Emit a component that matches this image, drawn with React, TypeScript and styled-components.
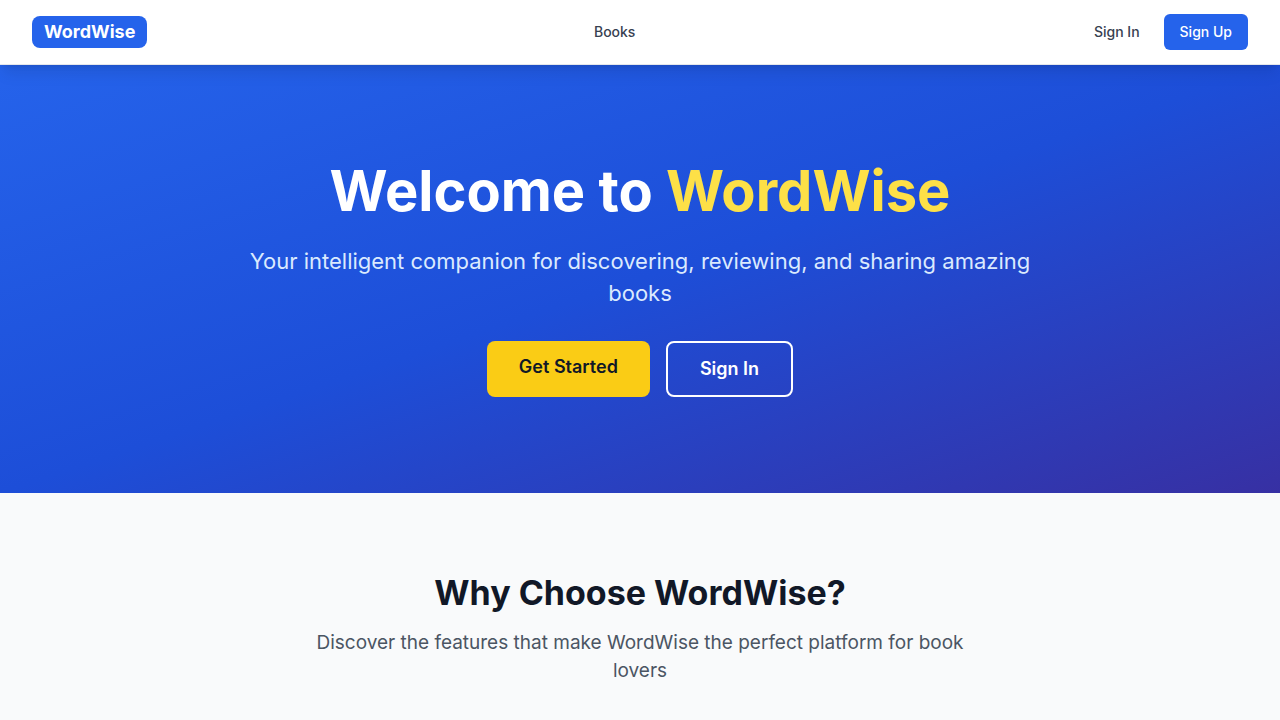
import React from "react";
import styled, { createGlobalStyle, css } from "styled-components";

const GlobalStyle = createGlobalStyle`
  *, *::before, *::after { box-sizing: border-box; }
  body {
    margin: 0;
    background: #f9fafb;
    color: #111827;
    font-family: Inter, "Liberation Sans", sans-serif;
    -webkit-font-smoothing: antialiased;
  }
  h1, h2, p { margin: 0; }
  a { text-decoration: none; color: inherit; }
`;

const Page = styled.div`
  min-height: 100vh;
`;

const Header = styled.header`
  position: sticky;
  top: 0;
  z-index: 10;
  background: #ffffff;
  border-bottom: 1px solid #e5e7eb;
  box-shadow: 0 10px 15px -3px rgba(0, 0, 0, 0.1), 0 4px 6px -4px rgba(0, 0, 0, 0.1);
`;

const Nav = styled.nav`
  display: flex;
  align-items: center;
  justify-content: space-between;
  max-width: 1280px;
  height: 64px;
  margin: 0 auto;
  padding: 0 32px;
`;

const Logo = styled.a`
  padding: 4px 12px;
  border-radius: 8px;
  background: #2563eb;
  color: #ffffff;
  font-size: 18px;
  font-weight: 700;
  line-height: 24px;
`;

const NavLink = styled.a`
  padding: 8px 12px;
  color: #374151;
  font-size: 14px;
  font-weight: 500;
  line-height: 20px;
`;

const AuthLinks = styled.div`
  display: flex;
  align-items: center;
  gap: 12px;
`;

const SignUpLink = styled(NavLink)`
  padding: 8px 16px;
  border-radius: 6px;
  background: #2563eb;
  color: #ffffff;
`;

const Hero = styled.section`
  padding: 96px 32px;
  background: linear-gradient(to bottom right, #2563eb, #1d4ed8, #3730a3);
  text-align: center;
`;

const HeroTitle = styled.h1`
  margin-bottom: 24px;
  color: #ffffff;
  font-size: 56px;
  font-weight: 700;
  line-height: 60px;
`;

const Accent = styled.span`
  color: #fde047;
`;

const HeroText = styled.p`
  max-width: 800px;
  margin: 0 auto 32px;
  color: #dbeafe;
  font-size: 22px;
  line-height: 32px;
`;

const Actions = styled.div`
  display: flex;
  flex-wrap: wrap;
  justify-content: center;
  gap: 16px;
`;

const ActionLink = styled.a<{ $outlined?: boolean }>`
  padding: 12px 32px;
  border-radius: 8px;
  font-size: 18px;
  font-weight: 600;
  line-height: 28px;
  ${({ $outlined }) =>
    $outlined
      ? css`
          border: 2px solid #ffffff;
          color: #ffffff;
        `
      : css`
          background: #facc15;
          color: #111827;
        `}
`;

const Features = styled.section`
  padding: 80px 32px;
  text-align: center;
`;

const FeaturesTitle = styled.h2`
  margin-bottom: 16px;
  font-size: 34px;
  font-weight: 700;
  line-height: 40px;
`;

const FeaturesText = styled.p`
  max-width: 672px;
  margin: 0 auto;
  color: #4b5563;
  font-size: 19px;
  line-height: 28px;
`;

export default function App() {
  return (
    <Page>
      <GlobalStyle />
      <Header>
        <Nav aria-label="Main">
          <Logo href="#home">WordWise</Logo>
          <NavLink href="#books">Books</NavLink>
          <AuthLinks>
            <NavLink href="#sign-in">Sign In</NavLink>
            <SignUpLink href="#sign-up">Sign Up</SignUpLink>
          </AuthLinks>
        </Nav>
      </Header>
      <main>
        <Hero>
          <HeroTitle>
            Welcome to <Accent>WordWise</Accent>
          </HeroTitle>
          <HeroText>
            Your intelligent companion for discovering, reviewing, and sharing amazing books
          </HeroText>
          <Actions>
            <ActionLink href="#sign-up">Get Started</ActionLink>
            <ActionLink href="#sign-in" $outlined>
              Sign In
            </ActionLink>
          </Actions>
        </Hero>
        <Features>
          <FeaturesTitle>Why Choose WordWise?</FeaturesTitle>
          <FeaturesText>
            Discover the features that make WordWise the perfect platform for book lovers
          </FeaturesText>
        </Features>
      </main>
    </Page>
  );
}
